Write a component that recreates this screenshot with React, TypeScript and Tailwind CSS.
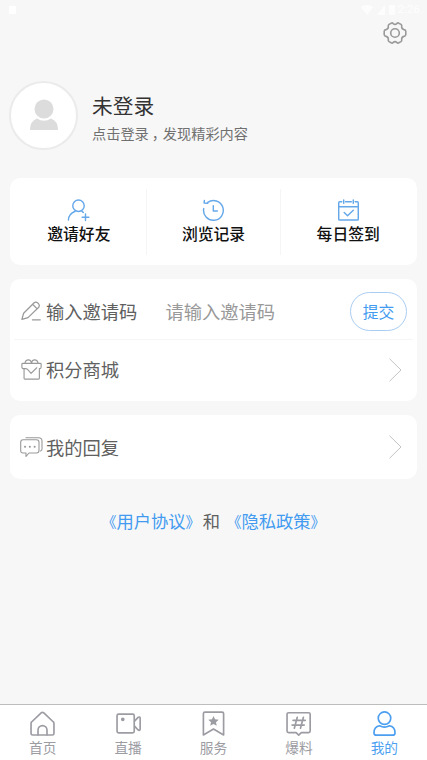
import type { ReactNode } from 'react';

interface IconProps {
  className?: string;
  children: ReactNode;
  viewBox?: string;
  strokeWidth?: number;
}

function Icon({ className = '', children, viewBox = '0 0 24 24', strokeWidth = 1.5 }: IconProps) {
  return (
    <svg
      className={`block shrink-0 ${className}`}
      viewBox={viewBox}
      fill="none"
      stroke="currentColor"
      strokeWidth={strokeWidth}
      strokeLinecap="round"
      strokeLinejoin="round"
    >
      {children}
    </svg>
  );
}

function StatusBar() {
  return (
    <div className="h-5 flex items-center justify-between pl-[9px] pr-[7px] text-white/80">
      <div className="w-[7px] h-[8px] rounded-[1px] bg-white"></div>
      <div className="flex items-center gap-1">
        <svg className="w-3 h-[10px]" viewBox="0 0 12 10" fill="currentColor">
          <path d="M0 2Q6-2 12 2L6 10Z" />
        </svg>
        <svg className="w-2 h-[10px]" viewBox="0 0 8 10" fill="currentColor">
          <path d="M8 0V10H0Z" />
        </svg>
        <div className="w-[6px] h-[10px] rounded-[1px] bg-white/80"></div>
        <span className="ml-[-1px] text-[11.5px] leading-none font-[Roboto,sans-serif]">2:26</span>
      </div>
    </div>
  );
}

function Chevron() {
  return (
    <Icon className="w-[13px] h-[24px] text-[#c4c4c4]" viewBox="0 0 13 24" strokeWidth={1}>
      <path d="M.8 1L12 12L.8 23" />
    </Icon>
  );
}

function AgreementLink({ title }: { title: string }) {
  return (
    <span className="text-[#429bf0]">
      <span className="pl-[2.3px] text-[15px]">《</span>
      {title}
      <span className="pr-[2.3px] text-[15px]">》</span>
    </span>
  );
}

const shortcuts = [
  {
    label: '邀请好友',
    icon: (
      <>
        <circle cx="12" cy="7" r="6" />
        <path d="M1.5 22C1.5 17.5 4.5 14.5 8.5 12.8M15.5 12.8L17 14M19.3 15.5V22.5M15.8 19H22.8" />
      </>
    ),
  },
  {
    label: '浏览记录',
    icon: (
      <>
        <path d="M6 3.5A10.3 10.3 0 1 1 1.8 10" />
        <path d="M2.5 1.5L2.2 4.3L6 4.5M11.8 7V12.5H16" />
      </>
    ),
  },
  {
    label: '每日签到',
    icon: (
      <>
        <path d="M5 2.8H2.8Q1.8 2.8 1.8 3.8V21Q1.8 22 2.8 22H21.2Q22.2 22 22.2 21V3.8Q22.2 2.8 21.2 2.8H19M9 2.8H15M7 1V4.5M17 1V4.5M1.8 8H22.2M7.5 14L11 17.5L17 11.8" />
      </>
    ),
  },
];

const tabs = [
  {
    label: '首页',
    icon: (
      <>
        <path d="M1.8 10.3Q1 11 1 12V21.5Q1 23 2.5 23H21.5Q23 23 23 21.5V12Q23 11 22.2 10.3L13.3 1.8Q12 .7 10.7 1.8Z" />
        <path d="M7.7 23V18.3A4.3 4.3 0 0 1 16.3 18.3V23" />
      </>
    ),
  },
  {
    label: '直播',
    icon: (
      <>
        <rect x="1" y="3" width="16.5" height="18" rx="1.5" />
        <circle cx="6.5" cy="8" r="1" fill="currentColor" />
        <path d="M18 9.5L21 6.3Q23.2 4.8 23.2 7.3V17Q23.2 19.5 21 18L18 14.8" />
      </>
    ),
  },
  {
    label: '服务',
    icon: (
      <>
        <path d="M2.3 2.3Q2.3 1 3.8 1H20.2Q21.7 1 21.7 2.3V23L12 17.3L2.3 23Z" />
        <path fill="currentColor" stroke="none" d="M12 4.8L13.5 8L17 8.4L14.4 10.8L15.1 14.2L12 12.5L8.9 14.2L9.6 10.8L7 8.4L10.5 8Z" />
      </>
    ),
  },
  {
    label: '爆料',
    icon: (
      <>
        <path d="M2.5 1.7H21.7Q23.2 1.7 23.2 3.2V19.3Q23.2 20.8 21.7 20.8H14.7L12.2 23.2L9.7 20.8H2.5Q1 20.8 1 19.3V3.2Q1 1.7 2.5 1.7Z" />
        <path d="M10.8 6L8 16.5M16.7 6L13.9 16.5M6.8 9H18.5M5.8 13.5H17.5" />
      </>
    ),
  },
  {
    label: '我的',
    active: true,
    icon: (
      <>
        <circle cx="12" cy="6.9" r="6" />
        <path d="M7.3 14.2Q1.9 15 1.9 21Q1.9 23.2 4.2 23.2H19.8Q22.1 23.2 22.1 21Q22.1 15 16.7 14.2Q12 16.7 7.3 14.2Z" />
      </>
    ),
  },
];

export default function App() {
  return (
    <div className="w-full h-screen flex flex-col overflow-hidden bg-[#f7f7f7] font-['Noto_Sans_CJK_SC',sans-serif]">
      <StatusBar />

      <div className="h-[26px] flex justify-end items-center pr-5">
        <Icon className="w-6 h-6 text-[#999999]" strokeWidth={1.6}>
          <path d="M8.2 2.2Q9.3 1.5 10.2 2.6Q12 4.3 13.8 2.6Q14.7 1.5 15.8 2.2L18 3.4Q19 4.1 18.7 5.4Q18.4 8 21 8.6Q22.7 8.9 22.8 10.2V13.8Q22.7 15.1 21 15.4Q18.4 16 18.7 18.6Q19 19.9 18 20.6L15.8 21.8Q14.7 22.5 13.8 21.4Q12 19.7 10.2 21.4Q9.3 22.5 8.2 21.8L6 20.6Q5 19.9 5.3 18.6Q5.6 16 3 15.4Q1.3 15.1 1.2 13.8V10.2Q1.3 8.9 3 8.6Q5.6 8 5.3 5.4Q5 4.1 6 3.4Z" />
          <circle cx="12" cy="12" r="4.3" />
        </Icon>
      </div>

      <div className="mt-[35px] ml-[9px] flex items-center">
        <div className="w-[69px] h-[69px] rounded-full border-2 border-[#ebebeb] bg-white flex items-center justify-center">
          <svg className="w-7 h-8 mb-[2px]" viewBox="0 0 28 32" fill="#dcdcdc">
            <circle cx="14" cy="10" r="9.5" />
            <path d="M0 31Q0 22 7 19.5Q14 24 21 19.5Q28 22 28 31Z" />
          </svg>
        </div>
        <div className="ml-[14px] pt-[3px]">
          <div className="text-[20.7px] leading-[30px] text-[#333333]">未登录</div>
          <div className="mt-[2px] text-[14.2px] leading-[22px] text-[#707070] whitespace-nowrap">
            点击登录<span className="pl-[3px] pr-[4px] [font-feature-settings:'halt']">，</span>发现精彩内容
          </div>
        </div>
      </div>

      <div className="mt-[28px] mx-[10px] px-[2px] h-[87px] rounded-[10px] bg-white flex items-center">
        {shortcuts.map(({ label, icon }, i) => (
          <div
            key={label}
            className={`flex-1 h-[66px] flex flex-col items-center pt-[10px] ${i > 0 ? 'border-l border-[#f5f5f5]' : ''}`}
          >
            <Icon className="w-[23px] h-[23px] text-[#65a8ea]">{icon}</Icon>
            <span className="text-[15.8px] leading-6 font-medium text-[#111111]">{label}</span>
          </div>
        ))}
      </div>

      <div className="mt-[14px] mx-[10px] h-[122px] rounded-[10px] bg-white text-[18.3px] text-[#606060]">
        <div className="h-[61px] mx-1 flex items-center border-b border-[#f5f5f5] pl-[7px] pt-[5px] pr-[6px]">
          <Icon className="w-[21px] h-[21px] text-[#999999]" strokeWidth={1.4}>
            <path d="M1 21L3 14L15 2Q17 .3 19.5 2.5Q22 5 20 7.5L8 19ZM13.5 4L18.5 9M13 21.5H22" />
          </Icon>
          <span className="ml-1 pt-px">输入邀请码</span>
          <span className="ml-[28px] pt-px text-[#999999]">请输入邀请码</span>
          <button className="ml-auto w-[57px] h-[39px] rounded-full border border-[#a9cdf2] pt-px text-[15.8px] text-[#429bf0]">
            提交
          </button>
        </div>
        <div className="h-[59px] flex items-center pl-[11px] pr-[15px]">
          <Icon className="w-[21px] h-[21px] text-[#999999]" strokeWidth={1.3}>
            <path d="M3.5 11V22Q3.5 23 4.5 23H20Q21 23 21 22V11M3.5 11Q1 11 1 9V6Q1 5 2 5H22Q23 5 23 6V9Q23 11 21 11M3.5 11H5.5Q7 11 8 12.5L11.5 16.5L18 10M4.5 5Q5 1 8.5 1Q11.5 1 12 5Q12.5 1 15.5 1Q19 1 19.5 5" />
          </Icon>
          <span className="ml-1">积分商城</span>
          <span className="ml-auto"><Chevron /></span>
        </div>
      </div>

      <div className="mt-[14px] mx-[10px] h-[64px] rounded-[10px] bg-white flex items-center pl-[10px] pr-[15px] text-[18.3px] text-[#606060]">
        <Icon className="w-[23px] h-[21px] text-[#999999]" viewBox="0 0 23 21" strokeWidth={1.1}>
          <path d="M3 2.7H16.5Q19 2.7 19 5.2V13.5Q19 16 16.5 16H9L6 19.5V16H3Q.7 16 .7 13.5V5.2Q.7 2.7 3 2.7ZM6 .7H18.5Q22 .7 22 4V12Q22 13.5 20.5 14" />
          <path d="M5 9.7H5.1M9.8 9.7H9.9M14.6 9.7H14.7" strokeWidth={2} />
        </Icon>
        <span className="ml-[3px] pt-px">我的回复</span>
        <span className="ml-auto"><Chevron /></span>
      </div>

      <div className="mt-[29px] flex justify-center text-[17.3px] leading-[26px] text-[#606060]">
        <AgreementLink title="用户协议" />
        <span>和</span>
        <span className="ml-1"><AgreementLink title="隐私政策" /></span>
      </div>

      <div className="mt-auto h-[56px] bg-white border-t border-[#bdbdbd] flex">
        {tabs.map(({ label, icon, active }) => (
          <div
            key={label}
            className={`flex-1 flex flex-col items-center pt-[6px] ${active ? 'text-[#4c9ff0]' : 'text-[#9c9ca3]'}`}
          >
            <Icon className="w-[25px] h-[25px]" strokeWidth={1.6}>{icon}</Icon>
            <span className="mt-px text-[13.7px] leading-5">{label}</span>
          </div>
        ))}
      </div>
    </div>
  );
}
